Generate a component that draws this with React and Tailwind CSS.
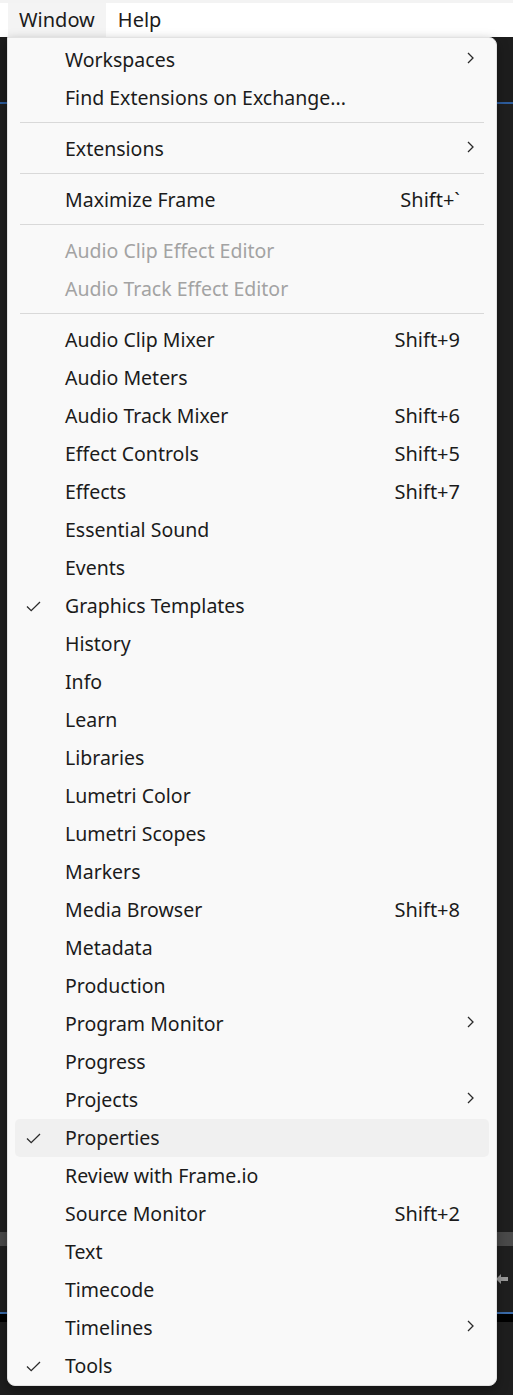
import { Fragment } from 'react'

const items = [
  { label: 'Workspaces', sub: true },
  { label: 'Find Extensions on Exchange...' },
  'sep',
  { label: 'Extensions', sub: true },
  'sep',
  { label: 'Maximize Frame', key: 'Shift+`' },
  'sep',
  { label: 'Audio Clip Effect Editor', disabled: true },
  { label: 'Audio Track Effect Editor', disabled: true },
  'sep',
  { label: 'Audio Clip Mixer', key: 'Shift+9' },
  { label: 'Audio Meters' },
  { label: 'Audio Track Mixer', key: 'Shift+6' },
  { label: 'Effect Controls', key: 'Shift+5' },
  { label: 'Effects', key: 'Shift+7' },
  { label: 'Essential Sound' },
  { label: 'Events' },
  { label: 'Graphics Templates', checked: true },
  { label: 'History' },
  { label: 'Info' },
  { label: 'Learn' },
  { label: 'Libraries' },
  { label: 'Lumetri Color' },
  { label: 'Lumetri Scopes' },
  { label: 'Markers' },
  { label: 'Media Browser', key: 'Shift+8' },
  { label: 'Metadata' },
  { label: 'Production' },
  { label: 'Program Monitor', sub: true },
  { label: 'Progress' },
  { label: 'Projects', sub: true },
  { label: 'Properties', checked: true, hover: true },
  { label: 'Review with Frame.io' },
  { label: 'Source Monitor', key: 'Shift+2' },
  { label: 'Text' },
  { label: 'Timecode' },
  { label: 'Timelines', sub: true },
  { label: 'Tools', checked: true },
]

function Check() {
  return (
    <svg width="15" height="11" viewBox="0 0 15 11" fill="none">
      <path d="M1 5.5 L5.2 9.6 L14 1" stroke="#2a2a2a" strokeWidth="1.3" />
    </svg>
  )
}

function Chevron() {
  return (
    <svg width="7" height="12" viewBox="0 0 7 12" fill="none">
      <path d="M1 1 L6 6 L1 11" stroke="#2a2a2a" strokeWidth="1.3" />
    </svg>
  )
}

function MenuRow({ item }) {
  return (
    <div
      className={`mx-[7px] h-[38px] flex items-center rounded-[5px] ${
        item.hover ? 'bg-[#f0f0f0]' : ''
      } ${item.disabled ? 'text-[#a3a3a3]' : 'text-[#1b1b1b]'}`}
    >
      <div className="w-[50px] pl-[11px] flex items-center">{item.checked && <Check />}</div>
      <div className="flex-1 whitespace-nowrap">{item.label}</div>
      {item.key && <div className="whitespace-nowrap text-[20px]">{item.key}</div>}
      <div className="w-[29px] pl-[7px] flex items-center -mt-[4px]">{item.sub && <Chevron />}</div>
    </div>
  )
}

export default function App() {
  return (
    <div
      className="relative w-[513px] h-[1395px] overflow-hidden bg-[#1e1e1e] text-[19.5px]"
      style={{ fontFamily: '"Noto Sans", "Open Sans", sans-serif' }}
    >
      {/* top menubar */}
      <div className="h-[37px] bg-white flex items-end border-t-[3px] border-[#f3f3f3] text-[20px]">
        <div className="ml-[8px] h-[34px] px-[11px] flex items-center bg-[#f4f4f4] text-[#1b1b1b]">Window</div>
        <div className="h-[34px] px-[12px] flex items-center text-[#1b1b1b]">Help</div>
      </div>

      {/* app background under the menu */}
      <div className="flex flex-col">
        <div className="h-[65px] bg-[#1d1d1d]" />
        <div className="h-[2px] bg-[#2d5c9c]" />
        <div className="h-[1128px] bg-[#1f1f1f]" />
        <div className="h-[14px] bg-[#4a4a4a]" />
        <div className="h-[66px] bg-[#1f1f1f] flex justify-end items-center pr-[5px]">
          <svg width="12" height="12" viewBox="0 0 12 12">
            <path d="M0 6 L5 1 L5 4 L12 4 L12 8 L5 8 L5 11 Z" fill="#9a9a9a" />
          </svg>
        </div>
        <div className="h-[2px] bg-[#3a6aa8]" />
        <div className="h-[8px] bg-black" />
        <div className="flex-1 bg-[#1e1e1e]" />
      </div>

      {/* dropdown */}
      <div className="absolute left-[7px] top-[37px] w-[490px] bg-[#f9f9f9] rounded-b-[8px] rounded-tr-[8px] pt-[3px] pb-0 shadow-[0_4px_12px_rgba(0,0,0,0.35)] border border-[#e2e2e2]">
        {items.map((item, i) =>
          item === 'sep' ? (
            <div key={i} className="pt-[5px] pb-[7px] px-[12px]">
              <div className="h-px bg-[#d9d9d9]" />
            </div>
          ) : (
            <Fragment key={i}>
              <MenuRow item={item} />
            </Fragment>
          )
        )}
      </div>
    </div>
  )
}
